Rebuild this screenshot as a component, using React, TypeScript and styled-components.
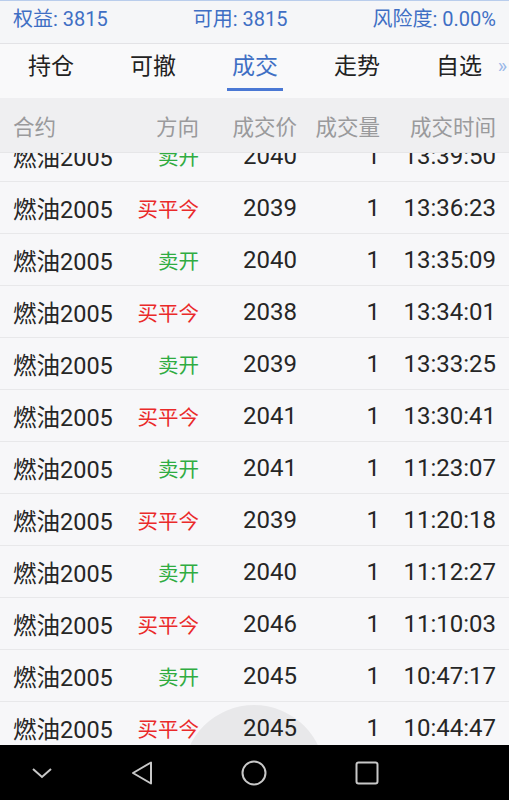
import React from "react";
import styled, {createGlobalStyle} from "styled-components";

const GlobalStyle = createGlobalStyle`
  html, body {
    margin: 0;
    padding: 0;
    background: #000;
  }
  body {
    font-family: Roboto, "Noto Sans CJK SC", "Noto Sans", sans-serif;
  }
`;

type Deal = {
    name: string;
    side: "buy" | "sell";
    price: number;
    volume: number;
    time: string;
};

const deals: Deal[] = [
    {name: "燃油2005", side: "sell", price: 2040, volume: 1, time: "13:39:50"},
    {name: "燃油2005", side: "buy", price: 2039, volume: 1, time: "13:36:23"},
    {name: "燃油2005", side: "sell", price: 2040, volume: 1, time: "13:35:09"},
    {name: "燃油2005", side: "buy", price: 2038, volume: 1, time: "13:34:01"},
    {name: "燃油2005", side: "sell", price: 2039, volume: 1, time: "13:33:25"},
    {name: "燃油2005", side: "buy", price: 2041, volume: 1, time: "13:30:41"},
    {name: "燃油2005", side: "sell", price: 2041, volume: 1, time: "11:23:07"},
    {name: "燃油2005", side: "buy", price: 2039, volume: 1, time: "11:20:18"},
    {name: "燃油2005", side: "sell", price: 2040, volume: 1, time: "11:12:27"},
    {name: "燃油2005", side: "buy", price: 2046, volume: 1, time: "11:10:03"},
    {name: "燃油2005", side: "sell", price: 2045, volume: 1, time: "10:47:17"},
    {name: "燃油2005", side: "buy", price: 2045, volume: 1, time: "10:44:47"},
];

const tabs = ["持仓", "可撤", "成交", "走势", "自选"];

const Screen = styled.div`
  width: 509px;
  height: 800px;
  display: flex;
  flex-direction: column;
  overflow: hidden;
  position: relative;
  background: #f7f7f9;
`;

const InfoBar = styled.div`
  height: 44px;
  box-sizing: border-box;
  border-top: 1px solid #b9cdec;
  border-bottom: 1px solid #e3e3e6;
  background: #f5f6f8;
  display: flex;
  align-items: center;
  justify-content: space-between;
  padding: 0 13px 9px 13px;
  color: #3f6fc4;
  font-size: 20px;
  flex-shrink: 0;
`;

const TabBar = styled.div`
  height: 54px;
  background: #f9f9fa;
  display: grid;
  grid-template-columns: repeat(5, 102px);
  position: relative;
  flex-shrink: 0;
`;

const Tab = styled.div<{ $active?: boolean }>`
  position: relative;
  display: flex;
  align-items: center;
  justify-content: center;
  padding-bottom: 14px;
  font-size: 23px;
  color: ${p => p.$active ? "#3f6fc4" : "#222"};

  &::after {
    content: "";
    display: ${p => p.$active ? "block" : "none"};
    position: absolute;
    left: 23px;
    right: 23px;
    bottom: 7px;
    height: 3px;
    background: #4a78d4;
  }
`;

const More = styled.div`
  position: absolute;
  right: 2px;
  top: 10px;
  color: #9ab8e8;
  font-size: 20px;
`;

const columns = "107px 79px 98px 83px 116px";

const HeaderRow = styled.div`
  height: 54px;
  background: #efeff1;
  border-bottom: 1px solid #e6e6e8;
  display: grid;
  grid-template-columns: ${columns};
  align-items: center;
  padding: 0 13px;
  color: #9a9a9c;
  font-size: 21.5px;
  flex-shrink: 0;
`;

const Cell = styled.div<{ $left?: boolean }>`
  text-align: ${p => p.$left ? "left" : "right"};
  white-space: nowrap;
`;

const List = styled.div`
  flex: 1;
  overflow: hidden;
  position: relative;
`;

const ListInner = styled.div`
  margin-top: -23px;
`;

const Row = styled.div`
  height: 51px;
  border-bottom: 1px solid #e8e8ea;
  display: grid;
  grid-template-columns: ${columns};
  align-items: center;
  padding: 0 13px;
  color: #262626;
  font-size: 24px;
`;

const Name = styled(Cell)`
  font-size: 23.5px;
`;

const Side = styled(Cell)<{ $buy: boolean }>`
  font-size: 20.5px;
  color: ${p => p.$buy ? "#ea2a2a" : "#2fac41"};
`;

const TouchCircle = styled.div`
  position: absolute;
  left: 183px;
  top: 705px;
  width: 142px;
  height: 142px;
  border-radius: 50%;
  background: rgba(0, 0, 0, 0.06);
  pointer-events: none;
`;

const NavBar = styled.div`
  height: 55px;
  background: #000;
  display: flex;
  align-items: center;
  position: relative;
  z-index: 1;
  flex-shrink: 0;
  padding-left: 31px;
`;

const NavButton = styled.div<{ $w: number }>`
  width: ${p => p.$w}px;
  display: flex;
  align-items: center;
`;

export default function App() {
    return (
        <Screen>
            <GlobalStyle/>
            <InfoBar>
                <span>权益: 3815</span>
                <span>可用: 3815</span>
                <span>风险度: 0.00%</span>
            </InfoBar>
            <TabBar>
                {tabs.map(t => (
                    <Tab key={t} $active={t === "成交"}>{t}</Tab>
                ))}
                <More>»</More>
            </TabBar>
            <HeaderRow>
                <Cell $left>合约</Cell>
                <Cell>方向</Cell>
                <Cell>成交价</Cell>
                <Cell>成交量</Cell>
                <Cell>成交时间</Cell>
            </HeaderRow>
            <List>
                <ListInner>
                    {deals.map((d, i) => (
                        <Row key={i}>
                            <Name $left>{d.name}</Name>
                            <Side $buy={d.side === "buy"}>{d.side === "buy" ? "买平今" : "卖开"}</Side>
                            <Cell>{d.price}</Cell>
                            <Cell>{d.volume}</Cell>
                            <Cell>{d.time}</Cell>
                        </Row>
                    ))}
                </ListInner>
            </List>
            <TouchCircle/>
            <NavBar>
                <NavButton $w={100}>
                    <svg width="22" height="12" viewBox="0 0 22 12">
                        <path d="M2 2 L11 10 L20 2" fill="none" stroke="#c8c8c8" strokeWidth="2"/>
                    </svg>
                </NavButton>
                <NavButton $w={110}>
                    <svg width="22" height="24" viewBox="0 0 22 24">
                        <path d="M20 1.5 L20 22.5 L2 12 Z" fill="none" stroke="#c8c8c8" strokeWidth="2"
                              strokeLinejoin="round"/>
                    </svg>
                </NavButton>
                <NavButton $w={114}>
                    <svg width="26" height="26" viewBox="0 0 26 26">
                        <circle cx="13" cy="13" r="11.5" fill="none" stroke="#c8c8c8" strokeWidth="2"/>
                    </svg>
                </NavButton>
                <NavButton $w={60}>
                    <svg width="24" height="24" viewBox="0 0 24 24">
                        <rect x="1.5" y="1.5" width="21" height="21" rx="2" fill="none" stroke="#c8c8c8"
                              strokeWidth="2"/>
                    </svg>
                </NavButton>
            </NavBar>
        </Screen>
    );
}
